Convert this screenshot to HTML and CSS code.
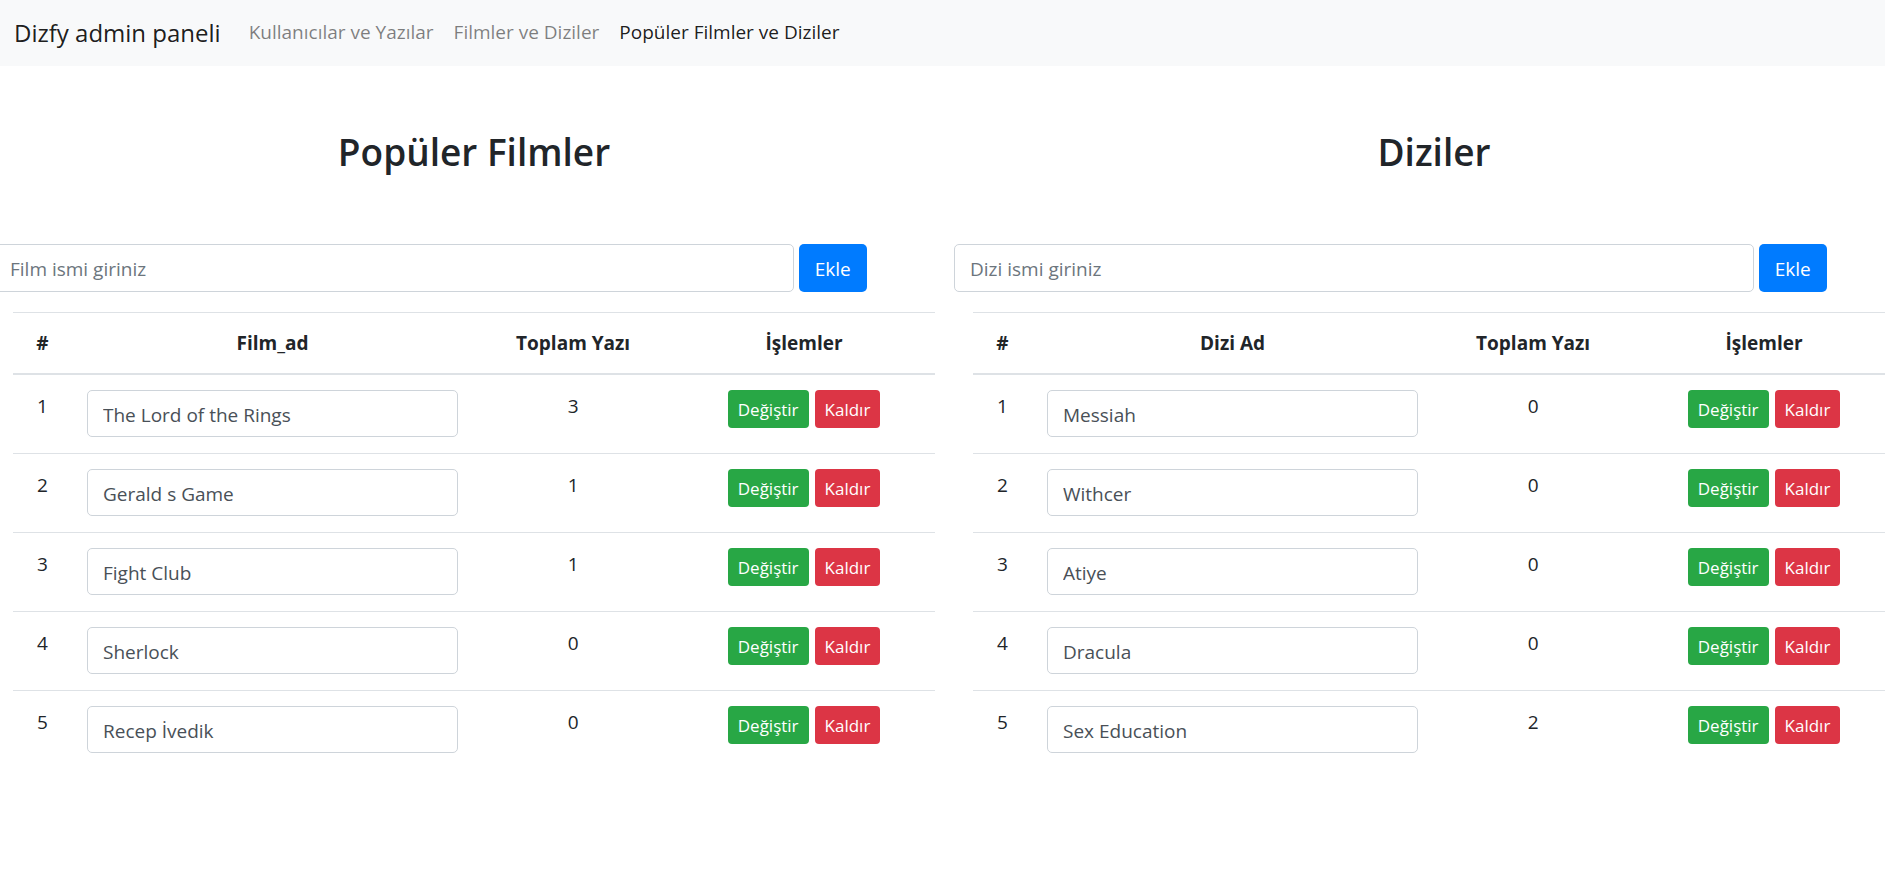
FILE: index.html
```
<!DOCTYPE html>
<html lang="tr">
<head>
<meta charset="utf-8">
<meta name="viewport" content="width=device-width, initial-scale=1">
<title>Dizfy admin paneli</title>
<link rel="stylesheet" href="styles.css">
</head>
<body>
<nav class="navbar">
  <a class="brand" href="#">Dizfy admin paneli</a>
  <ul class="nav-list">
    <li><a class="nav-link" href="#">Kullanıcılar ve Yazılar</a></li>
    <li><a class="nav-link" href="#">Filmler ve Diziler</a></li>
    <li><a class="nav-link active" href="#" aria-current="page">Popüler Filmler ve Diziler</a></li>
  </ul>
</nav>
<main class="columns">
  <section class="column">
    <h1 class="title">Popüler Filmler</h1>
    <form class="add-form">
      <input class="field add-field" type="text" placeholder="Film ismi giriniz" aria-label="Film ismi">
      <button class="btn btn-primary" type="button">Ekle</button>
    </form>
    <div class="table-wrap">
      <table class="table">
        <thead>
          <tr><th class="col-no">#</th><th class="col-name">Film_ad</th><th class="col-total">Toplam Yazı</th><th>İşlemler</th></tr>
        </thead>
        <tbody>
          <tr><td>1</td><td><input class="field" type="text" value="The Lord of the Rings" aria-label="Film 1"></td><td>3</td><td><div class="actions"><button class="btn btn-small btn-success" type="button">Değiştir</button><button class="btn btn-small btn-danger" type="button">Kaldır</button></div></td></tr>
          <tr><td>2</td><td><input class="field" type="text" value="Gerald s Game" aria-label="Film 2"></td><td>1</td><td><div class="actions"><button class="btn btn-small btn-success" type="button">Değiştir</button><button class="btn btn-small btn-danger" type="button">Kaldır</button></div></td></tr>
          <tr><td>3</td><td><input class="field" type="text" value="Fight Club" aria-label="Film 3"></td><td>1</td><td><div class="actions"><button class="btn btn-small btn-success" type="button">Değiştir</button><button class="btn btn-small btn-danger" type="button">Kaldır</button></div></td></tr>
          <tr><td>4</td><td><input class="field" type="text" value="Sherlock" aria-label="Film 4"></td><td>0</td><td><div class="actions"><button class="btn btn-small btn-success" type="button">Değiştir</button><button class="btn btn-small btn-danger" type="button">Kaldır</button></div></td></tr>
          <tr><td>5</td><td><input class="field" type="text" value="Recep İvedik" aria-label="Film 5"></td><td>0</td><td><div class="actions"><button class="btn btn-small btn-success" type="button">Değiştir</button><button class="btn btn-small btn-danger" type="button">Kaldır</button></div></td></tr>
        </tbody>
      </table>
    </div>
  </section>
  <section class="column">
    <h1 class="title">Diziler</h1>
    <form class="add-form">
      <input class="field add-field" type="text" placeholder="Dizi ismi giriniz" aria-label="Dizi ismi">
      <button class="btn btn-primary" type="button">Ekle</button>
    </form>
    <div class="table-wrap">
      <table class="table">
        <thead>
          <tr><th class="col-no">#</th><th class="col-name">Dizi Ad</th><th class="col-total">Toplam Yazı</th><th>İşlemler</th></tr>
        </thead>
        <tbody>
          <tr><td>1</td><td><input class="field" type="text" value="Messiah" aria-label="Dizi 1"></td><td>0</td><td><div class="actions"><button class="btn btn-small btn-success" type="button">Değiştir</button><button class="btn btn-small btn-danger" type="button">Kaldır</button></div></td></tr>
          <tr><td>2</td><td><input class="field" type="text" value="Withcer" aria-label="Dizi 2"></td><td>0</td><td><div class="actions"><button class="btn btn-small btn-success" type="button">Değiştir</button><button class="btn btn-small btn-danger" type="button">Kaldır</button></div></td></tr>
          <tr><td>3</td><td><input class="field" type="text" value="Atiye" aria-label="Dizi 3"></td><td>0</td><td><div class="actions"><button class="btn btn-small btn-success" type="button">Değiştir</button><button class="btn btn-small btn-danger" type="button">Kaldır</button></div></td></tr>
          <tr><td>4</td><td><input class="field" type="text" value="Dracula" aria-label="Dizi 4"></td><td>0</td><td><div class="actions"><button class="btn btn-small btn-success" type="button">Değiştir</button><button class="btn btn-small btn-danger" type="button">Kaldır</button></div></td></tr>
          <tr><td>5</td><td><input class="field" type="text" value="Sex Education" aria-label="Dizi 5"></td><td>2</td><td><div class="actions"><button class="btn btn-small btn-success" type="button">Değiştir</button><button class="btn btn-small btn-danger" type="button">Kaldır</button></div></td></tr>
        </tbody>
      </table>
    </div>
  </section>
</main>
</body>
</html>
```
FILE: styles.css
```
*, *::before, *::after { box-sizing: border-box; }

body {
  margin: 0;
  overflow-x: hidden;
  background: #fff;
  color: #212529;
  font-family: "Segoe UI", "Open Sans", "Noto Sans", sans-serif;
  font-size: 19px;
  line-height: 32px;
}

.navbar {
  display: flex;
  align-items: center;
  gap: 18px;
  padding: 10px 14px;
  background: #f8f9fa;
}

.brand {
  color: rgba(0, 0, 0, .9);
  font-size: 24px;
  line-height: 46px;
  text-decoration: none;
  white-space: nowrap;
}

.nav-list {
  display: flex;
  margin: 0;
  padding: 0 0 2px;
  list-style: none;
}

.nav-link {
  padding: 10px;
  color: rgba(0, 0, 0, .5);
  text-decoration: none;
  white-space: nowrap;
}

.nav-link.active { color: rgba(0, 0, 0, .9); }

.columns {
  display: flex;
  width: calc(100% + 35px);
  margin-left: -6px;
}

.column { flex: 1 1 0; min-width: 0; }

.title {
  margin: 62px 0 68px;
  font-size: 37px;
  font-weight: 600;
  line-height: 48px;
  text-align: center;
}

.add-form {
  display: flex;
  gap: 5px;
  margin-bottom: 20px;
}

.field {
  display: block;
  width: 100%;
  height: 47px;
  padding: 2px 15px 0;
  border: 1px solid #ced4da;
  border-radius: 5px;
  background: #fff;
  color: #495057;
  font: inherit;
}

.field::placeholder { color: #6c757d; opacity: 1; }

.add-field { width: 83.3%; height: 48px; }

.btn {
  padding: 2px 16px 0;
  border: 0;
  border-radius: 5px;
  color: #fff;
  font: inherit;
  white-space: nowrap;
}

.btn-primary { background: #007bff; }
.btn-success { background: #28a745; }
.btn-danger { background: #dc3545; }

.btn-small {
  height: 38px;
  padding: 2px 10px 0;
  border-radius: 4px;
  font-size: 17px;
}

.table-wrap { padding: 0 19px; }

.table {
  width: 100%;
  border-spacing: 0;
  table-layout: fixed;
  text-align: center;
}

.table th,
.table td {
  padding: 15px 15px 16px;
  border-top: 1px solid #dee2e6;
  vertical-align: top;
}

.table th {
  padding: 14px 15px;
  border-bottom: 2px solid #dee2e6;
  font-weight: 700;
}

.table tbody tr:first-child td { border-top: 0; }

.col-no { width: 6.4%; }
.col-name { width: 43.5%; }
.col-total { width: 21.7%; }

.actions {
  display: flex;
  justify-content: center;
  gap: 6px;
}
```
